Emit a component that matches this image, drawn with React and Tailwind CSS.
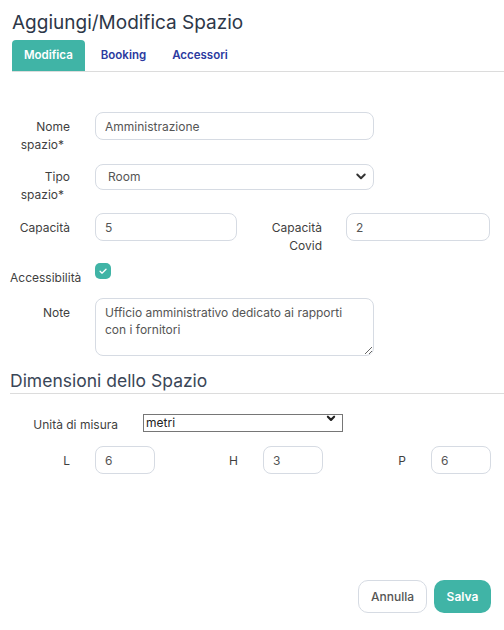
import { useState } from "react";

const Chevron = ({ className = "", strokeWidth = 2.2, size = 12 }) => (
    <svg className={className} width={size} height={size} viewBox="0 0 16 16" fill="none" stroke="currentColor" strokeWidth={strokeWidth} strokeLinecap="round" strokeLinejoin="round"><path d="M3 6l5 5 5-5"/></svg>
);

const inputCls = "h-[28px] rounded-[8px] border border-[#d6dbe3] bg-white px-[9px] text-[12px] text-[#555] outline-none";

function Label({ children, className = "" }) {
    return (
        <div className={`shrink-0 text-right text-[12px] leading-[18px] text-[#3f3f3f] ${className}`}>
            {children}
        </div>
    );
}

export default function App() {
    const [accessible, setAccessible] = useState(true);

    return (
        <div className="w-[504px] h-[630px] bg-white flex flex-col font-['Inter',sans-serif]">
            <h1 className="px-[12px] pt-[10px] text-[19px] leading-[25px] text-[#2d3748] font-normal">
                Aggiungi/Modifica Spazio
            </h1>

            <div className="ml-[12px] mt-[5px] flex border-b border-[#dcdcdc] h-[32px]">
                <button className="px-[12px] rounded-t-[4px] bg-[#40b4a6] text-white text-[11.5px] font-semibold">Modifica</button>
                <button className="ml-[4px] px-[12px] text-[#2b3aa0] text-[11.5px] font-semibold">Booking</button>
                <button className="ml-[2px] px-[12px] text-[#2b3aa0] text-[11.5px] font-semibold">Accessori</button>
            </div>

            <div className="mt-[40px] flex flex-col">
                <div className="flex items-start">
                    <Label className="w-[70px] pt-[6px]">Nome<br /><span className="mr-[6px]">spazio*</span></Label>
                    <input className={`${inputCls} ml-[25px] w-[279px]`} defaultValue="Amministrazione" />
                </div>

                <div className="mt-[9px] flex items-start">
                    <Label className="w-[70px] pt-[5px]">Tipo<br /><span className="mr-[6px]">spazio*</span></Label>
                    <div className="relative ml-[25px] w-[279px]">
                        <select className="h-[26px] w-full appearance-none rounded-[8px] border border-[#d6dbe3] bg-white pl-[12px] text-[12px] text-[#555] outline-none" defaultValue="Room">
                            <option>Room</option>
                            <option>Desk</option>
                        </select>
                        <Chevron className="pointer-events-none absolute right-[7px] top-[7px] text-[#333]" strokeWidth={2.6} />
                    </div>
                </div>

                <div className="mt-[9px] flex items-start">
                    <Label className="w-[70px] pt-[6px]">Capacità</Label>
                    <input className={`${inputCls} ml-[25px] w-[142px]`} defaultValue="5" />
                    <Label className="w-[85px] pt-[6px] leading-[16px]">Capacità<br />Covid</Label>
                    <input className={`${inputCls} ml-[24px] w-[144px]`} defaultValue="2" />
                </div>

                <div className="mt-[8px] flex items-start">
                    <Label className="w-[80px] pt-[6px] pl-[10px] text-left">Accessibilità</Label>
                    <button
                        onClick={() => setAccessible(!accessible)}
                        className={`ml-[15px] flex h-[16px] w-[16px] items-center justify-center rounded-[5px] ${accessible ? "bg-[#40b4a6]" : "border border-[#bbb] bg-white"}`}
                    >
                        {accessible && (
                            <svg width="10" height="10" viewBox="0 0 12 12" fill="none" stroke="white" strokeWidth="1.6" strokeLinecap="round" strokeLinejoin="round"><path d="M2.5 6.3l2.3 2.3 4.8-4.8"/></svg>
                        )}
                    </button>
                </div>

                <div className="mt-[11px] flex items-start">
                    <Label className="w-[70px] pt-[6px]">Note</Label>
                    <textarea
                        className="ml-[25px] h-[58px] w-[279px] rounded-[8px] border border-[#d6dbe3] bg-white px-[9px] py-[5px] text-[12px] leading-[17px] text-[#555] outline-none"
                        defaultValue="Ufficio amministrativo dedicato ai rapporti con i fornitori"
                    />
                </div>
            </div>

            <h2 className="ml-[10px] mt-[13px] border-b border-[#dcdcdc] text-[17.5px] leading-[24px] text-[#3a4657] font-normal">
                Dimensioni dello Spazio
            </h2>

            <div className="mt-[15px] flex items-start">
                <Label className="w-[118px] pt-[7px]">Unità di misura</Label>
                <div className="relative ml-[25px] w-[200px]">
                    <select className="h-[18px] w-full appearance-none border border-[#767676] bg-white pl-[2px] text-[12px] leading-[16px] text-[#222] outline-none" defaultValue="metri">
                        <option>metri</option>
                        <option>centimetri</option>
                    </select>
                    <Chevron className="pointer-events-none absolute right-[7px] top-[4px] text-[#222]" strokeWidth={3.4} size={10} />
                </div>
            </div>

            <div className="mt-[12px] flex items-start">
                <Label className="w-[70px] pt-[6px]">L</Label>
                <input className={`${inputCls} ml-[25px] w-[60px] h-[27px]`} defaultValue="6" />
                <Label className="w-[83px] pt-[6px]">H</Label>
                <input className={`${inputCls} ml-[25px] w-[60px] h-[27px]`} defaultValue="3" />
                <Label className="w-[83px] pt-[6px]">P</Label>
                <input className={`${inputCls} ml-[25px] w-[60px] h-[27px]`} defaultValue="6" />
            </div>

            <div className="flex-1" />

            <div className="flex justify-end gap-[7px] pr-[13px] pb-[17px]">
                <button className="h-[33px] w-[69px] rounded-[10px] border border-[#d6dbe3] bg-white text-[12px] font-medium text-[#555]">Annulla</button>
                <button className="h-[33px] w-[57px] rounded-[10px] bg-[#40b4a6] text-[12px] font-semibold text-white">Salva</button>
            </div>
        </div>
    );
}
